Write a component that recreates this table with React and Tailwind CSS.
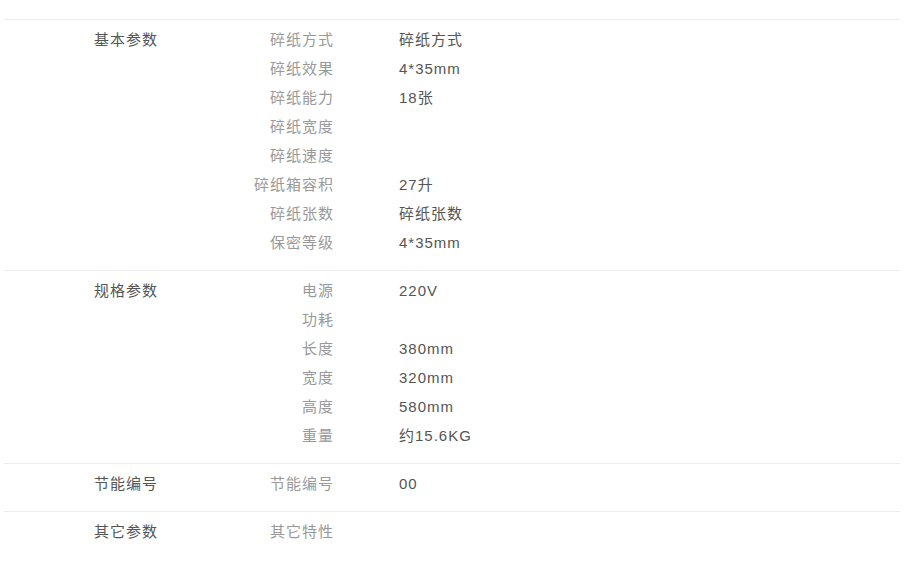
import React from 'react';

const groups = [
  {
    name: '基本参数',
    rows: [
      ['碎纸方式', '碎纸方式'],
      ['碎纸效果', '4*35mm'],
      ['碎纸能力', '18张'],
      ['碎纸宽度', ''],
      ['碎纸速度', ''],
      ['碎纸箱容积', '27升'],
      ['碎纸张数', '碎纸张数'],
      ['保密等级', '4*35mm'],
    ],
  },
  {
    name: '规格参数',
    rows: [
      ['电源', '220V'],
      ['功耗', ''],
      ['长度', '380mm'],
      ['宽度', '320mm'],
      ['高度', '580mm'],
      ['重量', '约15.6KG'],
    ],
  },
  {
    name: '节能编号',
    rows: [['节能编号', '00']],
  },
  {
    name: '其它参数',
    rows: [['其它特性', '']],
  },
];

const App = () => {
  return (
    <div
      className="min-h-[566px] bg-white pt-[19px] pl-[4px] pr-[5px] text-[15px] tracking-[1px]"
      style={{ fontFamily: '"Liberation Sans", "Noto Sans CJK SC", sans-serif' }}
    >
      <div className="border-t border-[#eee]">
        {groups.map((g, i) => (
          <div
            key={g.name}
            className={`flex pt-[5px] pb-[13px] ${i < groups.length - 1 ? 'border-b border-[#eee]' : ''}`}
          >
            <div className="w-[250px] shrink-0 pl-[90px] leading-[29px] text-[#555]">{g.name}</div>
            <div className="flex flex-col">
              {g.rows.map(([label, value]) => (
                <div key={label} className="flex h-[29px] leading-[29px]">
                  <div className="w-[80px] shrink-0 text-right text-[#999]">{label}</div>
                  <div className="ml-[65px] text-[#555]">{value}</div>
                </div>
              ))}
            </div>
          </div>
        ))}
      </div>
    </div>
  );
};

export default App;
